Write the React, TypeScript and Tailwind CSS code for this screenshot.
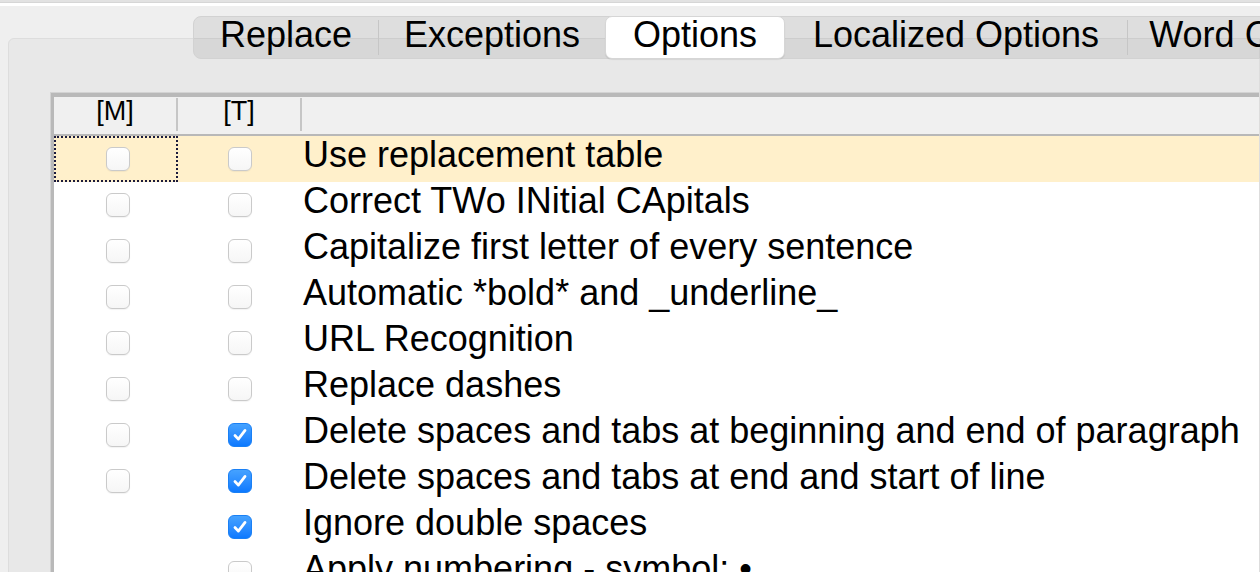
import React from 'react';

interface Row {
    label: string;
    m: boolean | null;
    t: boolean;
}

const rows: Row[] = [
    { label: 'Use replacement table', m: false, t: false },
    { label: 'Correct TWo INitial CApitals', m: false, t: false },
    { label: 'Capitalize first letter of every sentence', m: false, t: false },
    { label: 'Automatic *bold* and _underline_', m: false, t: false },
    { label: 'URL Recognition', m: false, t: false },
    { label: 'Replace dashes', m: false, t: false },
    { label: 'Delete spaces and tabs at beginning and end of paragraph', m: false, t: true },
    { label: 'Delete spaces and tabs at end and start of line', m: false, t: true },
    { label: 'Ignore double spaces', m: null, t: true },
    { label: 'Apply numbering - symbol: •', m: null, t: false },
];

function Checkbox({ checked }: { checked: boolean }) {
    if (checked) {
        return (
            <span className="flex h-6 w-6 items-center justify-center rounded-[6px] border border-[#1a80f5] bg-gradient-to-b from-[#45a2ff] to-[#0b79ff]">
                <svg width="24" height="24" viewBox="0 0 24 24" fill="none">
                    <polyline
                        points="6.5,12.5 10.2,16.5 17.5,7"
                        stroke="white"
                        strokeWidth="3"
                        strokeLinecap="round"
                        strokeLinejoin="round"
                    />
                </svg>
            </span>
        );
    }
    return (
        <span className="block h-6 w-6 rounded-[6px] border border-[#cacaca] bg-gradient-to-b from-white to-[#f6f6f6] shadow-[0_1px_1px_rgba(0,0,0,0.05)]" />
    );
}

const tabs = [
    { label: 'Replace', w: 'w-[184px]' },
    { label: 'Exceptions', w: 'w-[226px]' },
    { label: 'Options', w: 'w-[180px]', active: true },
    { label: 'Localized Options', w: 'w-[342px]' },
    { label: 'Word Completion', w: 'w-[320px]' },
];

export default function App() {
    return (
        <div className="relative h-[572px] w-[1260px] overflow-hidden bg-[#efefef] font-['Liberation_Sans',Arial,sans-serif] text-black">
            {/* window top edge */}
            <div className="h-[2px] bg-[#e2e2e2]" />
            <div className="h-px bg-[#d6d6d6]" />
            <div className="h-[3px] bg-white" />

            {/* Segmented tabs */}
            <div className="relative z-10 ml-[193px] mt-[10px] flex h-[43px] w-max rounded-[8px] border border-[#d2d2d2] bg-black/[0.07]">
                {tabs.map((tab, i) => (
                    <React.Fragment key={tab.label}>
                        {i === 1 || i === 4 ? (
                            <span className="my-[3px] w-px shrink-0 bg-[#c6c6c6]" />
                        ) : null}
                        <div
                            className={
                                tab.active
                                    ? `${tab.w} -my-px flex shrink-0 items-center justify-center whitespace-nowrap rounded-[7px] border border-[#d6d6d6] bg-white pb-[5px] text-[36px] shadow-[0_1px_1px_rgba(0,0,0,0.08)]`
                                    : `${tab.w} flex shrink-0 items-center justify-center whitespace-nowrap pb-[5px] text-[36px]`
                            }
                        >
                            {tab.label}
                        </div>
                    </React.Fragment>
                ))}
            </div>

            {/* Panel */}
            <div className="ml-[8px] -mt-[21px] h-[560px] rounded-tl-[6px] border border-[#dddddd] bg-[#e8e8e8] pl-[41px] pt-[53px]">
                <div className="h-full border border-[#d3d3d3] border-r-0 border-b-0">
                    <div className="h-full border-l-[3px] border-t-[4px] border-[#b9b9b9] bg-white">
                        {/* Header */}
                        <div className="flex h-[39px] border-b-2 border-[#b8b8b8] bg-[#f0f0f0] text-[27px] leading-[28px]">
                            <div className="w-[122px] text-center">[M]</div>
                            <span className="mt-px h-[33px] w-[2px] bg-[#c6c6c6]" />
                            <div className="w-[122px] text-center">[T]</div>
                            <span className="mt-px h-[33px] w-[2px] bg-[#c6c6c6]" />
                            <div className="flex-1" />
                        </div>

                        {/* Rows */}
                        {rows.map((row, i) => (
                            <div
                                key={row.label}
                                className={`flex h-[46px] ${i === 0 ? 'bg-[#fff0cb]' : ''}`}
                            >
                                <div
                                    className={`flex w-[124px] shrink-0 items-center justify-center pl-[4px] ${
                                        i === 0 ? 'border-2 border-dotted border-[#1b1b3d]' : ''
                                    }`}
                                >
                                    {row.m !== null && <Checkbox checked={row.m} />}
                                </div>
                                <div className="flex w-[124px] shrink-0 items-center justify-center">
                                    <Checkbox checked={row.t} />
                                </div>
                                <div className="whitespace-nowrap pl-px text-[36px] leading-[38px]">
                                    {row.label}
                                </div>
                            </div>
                        ))}
                    </div>
                </div>
            </div>
        </div>
    );
}
